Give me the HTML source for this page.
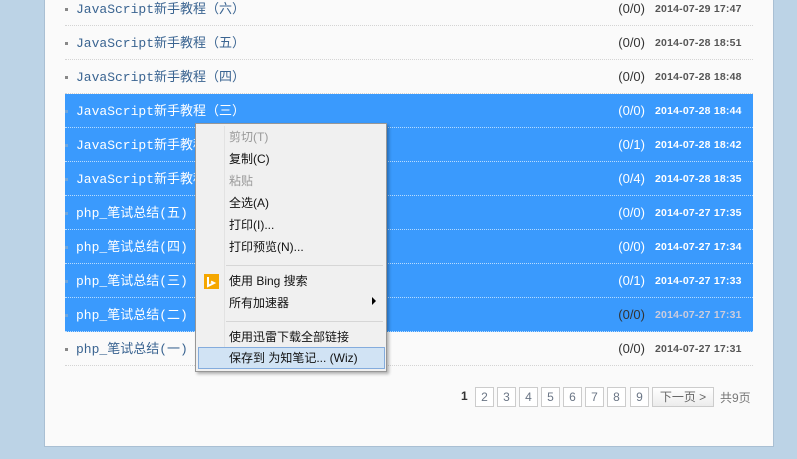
<!DOCTYPE html>
<html><head><meta charset="utf-8"><style>
*{margin:0;padding:0;box-sizing:border-box}
body{width:797px;height:459px;background:#bcd3e6;position:relative;overflow:hidden;font-family:"Liberation Sans","Noto Sans CJK SC",sans-serif}
.panel{position:absolute;left:44px;top:-2px;width:730px;height:449px;background:#fafafa;border:1px solid #a9bfd3}
.row{position:absolute;left:65px;width:688px;height:34px;border-bottom:1px dotted #d4d4d4}
.row.sel{background:#3a9afd;border-bottom:1px dotted #b8dcff}
.row .b{position:absolute;left:0;top:16px;width:3px;height:3px;background:#888}
.row .t{position:absolute;left:11px;top:1px;line-height:34px;font-family:"Liberation Mono","Noto Sans CJK SC",monospace;font-size:13px;color:#3a6491}
.row .c{position:absolute;right:108px;top:0;line-height:34px;font-size:13px;color:#333}
.row .d{position:absolute;left:590px;top:0;line-height:34px;font-size:10.5px;font-weight:bold;color:#555;letter-spacing:.2px}
.row.sel .t,.row.sel .c,.row.sel .d{color:#fff}
.row.sel .b{background:#6fa6dd}
.menu{position:absolute;left:195px;top:123px;width:192px;height:249px;background:#f0f0f0;border:1px solid #979797;box-shadow:2px 2px 3px rgba(0,0,0,.3)}
.menu .g{position:absolute;left:28px;top:2px;bottom:2px;width:1px;background:#e2e2e2}
.mi{position:absolute;left:33px;font-size:12px;color:#111;line-height:22px;height:22px}
.mi.dis{color:#999}
.sep{position:absolute;left:30px;right:3px;height:1px;background:#d6d6d6}
.hl{position:absolute;left:2px;width:187px;top:223px;height:22px;background:#d1e3f4;border:1px solid #84acdd}
.pg{position:absolute;top:387px;height:20px;width:19px;border:1px solid #ccc;font-size:12px;color:#6a7585;text-align:center;line-height:18px;background:#fff}
</style></head><body>
<div class="panel"></div>

<div class="row" style="top:-8px"><div class="b"></div><div class="t">JavaScript新手教程（六）</div><div class="c">(0/0)</div><div class="d">2014-07-29 17:47</div></div>
<div class="row" style="top:26px"><div class="b"></div><div class="t">JavaScript新手教程（五）</div><div class="c">(0/0)</div><div class="d">2014-07-28 18:51</div></div>
<div class="row" style="top:60px"><div class="b"></div><div class="t">JavaScript新手教程（四）</div><div class="c">(0/0)</div><div class="d">2014-07-28 18:48</div></div>
<div class="row sel" style="top:94px"><div class="b"></div><div class="t">JavaScript新手教程（三）</div><div class="c">(0/0)</div><div class="d">2014-07-28 18:44</div></div>
<div class="row sel" style="top:128px"><div class="b"></div><div class="t">JavaScript新手教程（二）</div><div class="c">(0/1)</div><div class="d">2014-07-28 18:42</div></div>
<div class="row sel" style="top:162px"><div class="b"></div><div class="t">JavaScript新手教程（一）</div><div class="c">(0/4)</div><div class="d">2014-07-28 18:35</div></div>
<div class="row sel" style="top:196px"><div class="b"></div><div class="t">php_笔试总结(五)</div><div class="c">(0/0)</div><div class="d">2014-07-27 17:35</div></div>
<div class="row sel" style="top:230px"><div class="b"></div><div class="t">php_笔试总结(四)</div><div class="c">(0/0)</div><div class="d">2014-07-27 17:34</div></div>
<div class="row sel" style="top:264px"><div class="b"></div><div class="t">php_笔试总结(三)</div><div class="c">(0/1)</div><div class="d">2014-07-27 17:33</div></div>
<div class="row sel" style="top:298px"><div class="b"></div><div class="t">php_笔试总结(二)</div><div class="c" style="color:#333">(0/0)</div><div class="d" style="color:#ccd">2014-07-27 17:31</div></div>
<div class="row" style="top:332px"><div class="b"></div><div class="t">php_笔试总结(一)</div><div class="c">(0/0)</div><div class="d">2014-07-27 17:31</div></div>

<div class="menu">
<div class="g"></div>
<div class="hl"></div>
<div class="mi dis" style="top:2px">剪切(T)</div>
<div class="mi" style="top:24px">复制(C)</div>
<div class="mi dis" style="top:46px">粘贴</div>
<div class="mi" style="top:68px">全选(A)</div>
<div class="mi" style="top:90px">打印(I)...</div>
<div class="mi" style="top:112px">打印预览(N)...</div>
<div class="sep" style="top:141px"></div>
<div style="position:absolute;left:8px;top:150px;width:15px;height:15px;background:#f5a700"><svg width="15" height="15"><path d="M4 3v9l6-3-3-1.5" fill="none" stroke="#fff" stroke-width="2"/></svg></div>
<div class="mi" style="top:146px">使用 Bing 搜索</div>
<div class="mi" style="top:168px">所有加速器</div>
<div style="position:absolute;left:176px;top:173px;width:0;height:0;border-left:4px solid #000;border-top:4px solid transparent;border-bottom:4px solid transparent"></div>
<div class="sep" style="top:197px"></div>
<div class="mi" style="top:202px">使用迅雷下载全部链接</div>
<div class="mi" style="top:223px">保存到 为知笔记... (Wiz)</div>
</div>

<div style="position:absolute;left:461px;top:389px;font-size:12px;font-weight:bold;color:#333">1</div>
<div class="pg" style="left:475px">2</div>
<div class="pg" style="left:497px">3</div>
<div class="pg" style="left:519px">4</div>
<div class="pg" style="left:541px">5</div>
<div class="pg" style="left:563px">6</div>
<div class="pg" style="left:585px">7</div>
<div class="pg" style="left:607px">8</div>
<div class="pg" style="left:630px">9</div>
<div class="pg" style="left:652px;width:62px;background:linear-gradient(#fff,#ececec);color:#666">下一页 &gt;</div>
<div style="position:absolute;left:720px;top:389px;font-size:12px;color:#777">共9页</div>
</body></html>
